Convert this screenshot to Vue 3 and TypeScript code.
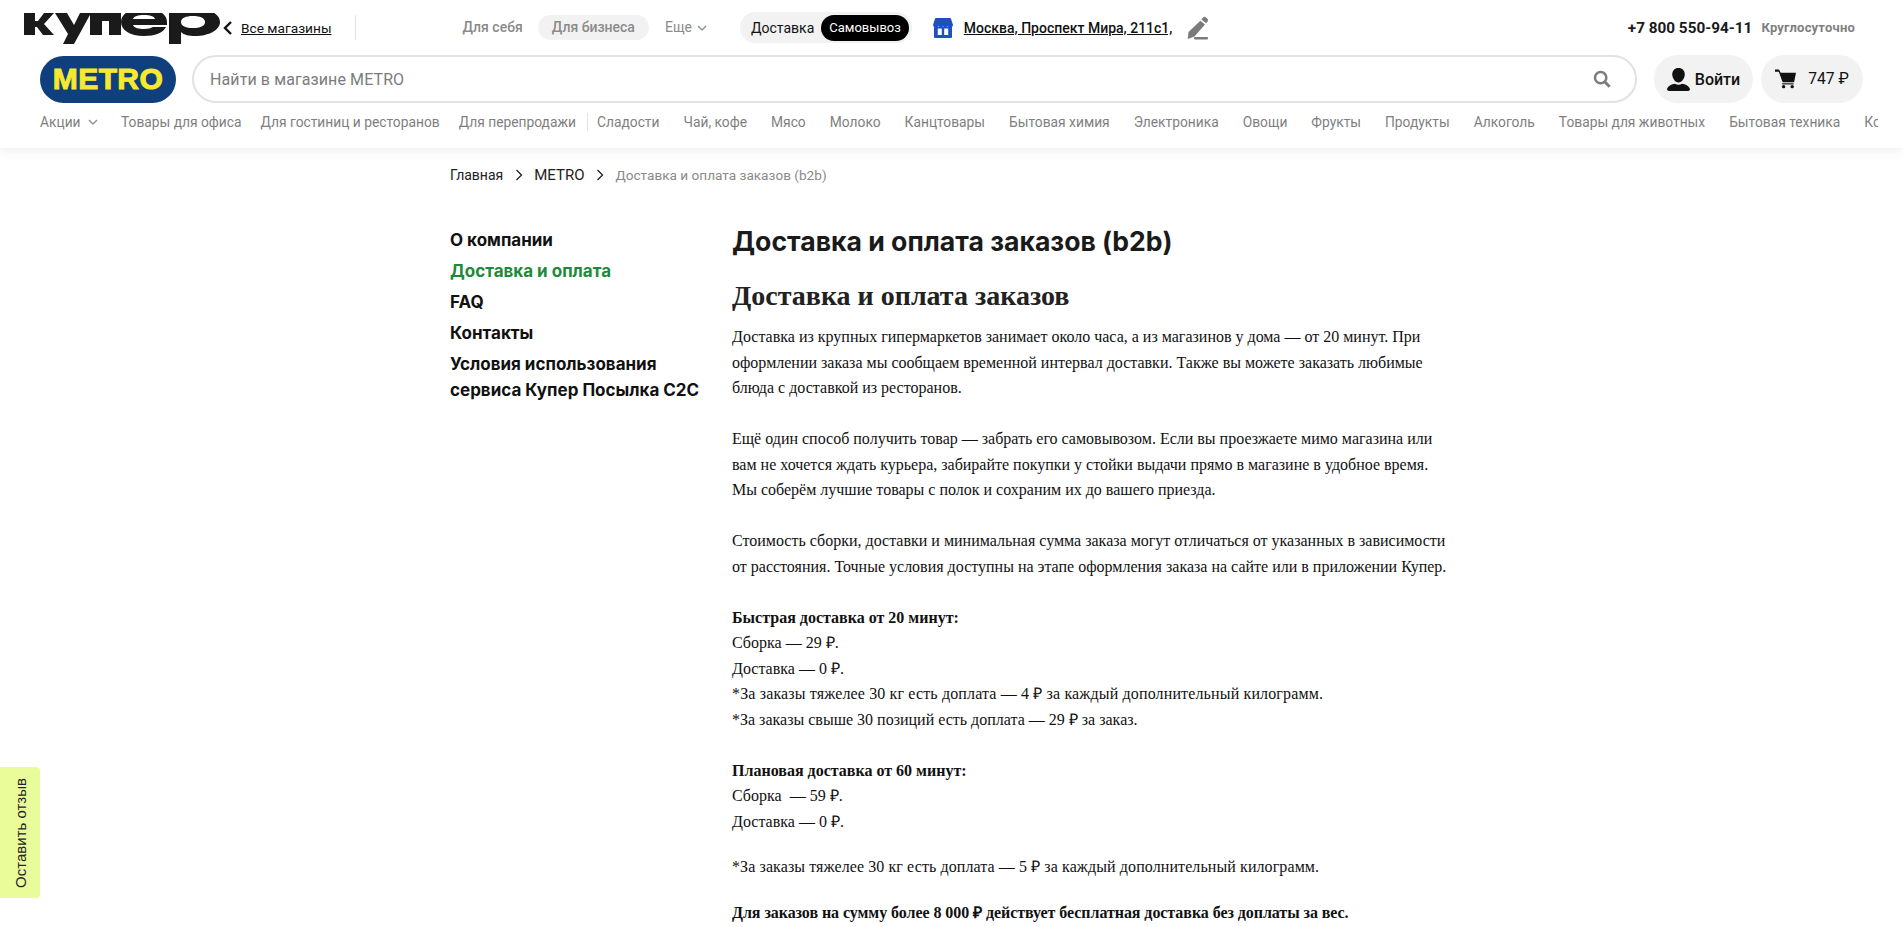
<template>
  <div class="page">
    <header class="header">
      <div class="top-row">
        <svg class="kuper" viewBox="0 0 196 31" aria-label="Купер">
          <path d="M0 0h11v8h3L20 0h10L20 11l10 11H19l-6-8h-2v8H0z" fill="#1a1a1a" />
          <path d="M31 0h12l7 12 6-12h11L50 31H39l5-10z" fill="#1a1a1a" />
          <path d="M66-2h31v24H85V8h-7v14H66z" fill="#1a1a1a" />
          <path fill-rule="evenodd" d="M143 12H109c1 3 6 4 11 4 4 0 7-1 9-2h13c-3 6-11 9-22 9-14 0-23-6-23-14S106-5 120-5s23 6 23 14zM109 6h22c-1-3-5-4-11-4s-10 1-11 4z" fill="#1a1a1a" />
          <path fill-rule="evenodd" d="M145-4h12v3c3-3 8-4 14-4 14 0 25 6 25 14s-11 14-25 14c-6 0-11-1-14-4v12H145zM157 9c0 4 5 6 12 6s12-2 12-6-5-6-12-6-12 2-12 6z" fill="#1a1a1a" />
        </svg>
        <a class="all-shops">
          <svg class="back" viewBox="0 0 10 16"><path d="M8 2 2 8l6 6" fill="none" stroke="#111" stroke-width="2.4" /></svg>
          <span>Все магазины</span>
        </a>
        <div class="divider"></div>
        <nav class="segments">
          <span class="seg">Для себя</span>
          <span class="seg seg-active">Для бизнеса</span>
          <span class="seg seg-more">Еще
            <svg class="chev" viewBox="0 0 10 6"><path d="M1 1l4 4 4-4" fill="none" stroke="#8f8f8f" stroke-width="1.4" /></svg>
          </span>
        </nav>
        <div class="delivery-switch">
          <span class="mode">Доставка</span>
          <span class="mode mode-on">Самовывоз</span>
        </div>
        <svg class="store" viewBox="0 0 20 20">
          <path d="M3 0h14a1 1 0 0 1 1 .7L20 7c0 1.500-1.500 2.500-3 2.500-1 0-2-.4-2.500-1.200-.6.800-1.500 1.200-2.500 1.200S10.500 9.100 10 8.300c-.5.800-1.500 1.200-2 1.200-1 0-1.900-.4-2.500-1.200C5 9.100 4 9.500 3 9.500 1.500 9.500 0 8.500 0 7L2 .7A1 1 0 0 1 3 0z" fill="#1c50c4" />
          <path d="M1 9h18v10a1 1 0 0 1-1 1H2a1 1 0 0 1-1-1z" fill="#1c50c4" />
          <path d="M4.800 10.500h4v6.500h-4zM11.200 10.500h4v6.500h-4z" fill="#fff" />
        </svg>
        <a class="address">Москва, Проспект Мира, 211с1,</a>
        <svg class="pencil" viewBox="0 0 24 24">
          <path d="M18 1.500a2 2 0 0 1 2.700-.2l1.700 1.400a2 2 0 0 1 .2 2.800l-1.500 1.800-4.700-3.900z" fill="#7b7b7b" />
          <path d="M15.300 4.700 20 8.600 9.500 20.500 2.700 23 3.500 16z" fill="#7b7b7b" />
          <rect x="9" y="21" width="14" height="2.400" rx="1" fill="#7b7b7b" />
        </svg>
        <div class="phone-box">
          <span class="phone">+7 800 550-94-11</span>
          <span class="phone-note">Круглосуточно</span>
        </div>
      </div>
      <div class="search-row">
        <div class="metro">
          <span class="metro-word">METRO</span>
        </div>
        <div class="search">
          <span class="placeholder">Найти в магазине METRO</span>
          <svg class="loupe" viewBox="0 0 20 20">
            <circle cx="8.500" cy="8.500" r="6.300" fill="none" stroke="#7d7d7d" stroke-width="2.800" />
            <path d="M13 13l5.500 5.500" stroke="#7d7d7d" stroke-width="3.200" />
          </svg>
        </div>
        <button class="pill login">
          <svg class="person" viewBox="0 0 24 24">
            <path d="M12 0c4 0 6.500 2.800 6.500 6.500 0 4.200-2.800 8.500-6.500 8.500S5.500 10.700 5.500 6.500C5.500 2.800 8 0 12 0z" fill="#111" />
            <path d="M8.300 16.500c1 .7 2.300 1.100 3.700 1.100s2.700-.4 3.700-1.100c3.500.6 6.800 1.800 8.300 5.500 0 1-.6 2-2 2H2c-1.400 0-2-1-2-2 1.500-3.700 4.800-4.900 8.300-5.500z" fill="#111" />
          </svg>
          <span>Войти</span>
        </button>
        <button class="pill cart">
          <svg class="cart-ico" viewBox="0 0 22 20">
            <path d="M0 0h3.500a1 1 0 0 1 1 .6L6 3.500h16l-2 10H8L4 2.500H0z" fill="#111" />
            <rect x="7.500" y="14.500" width="12" height="1.200" fill="#111" />
            <circle cx="9" cy="18" r="1.800" fill="#111" />
            <circle cx="18" cy="18" r="1.800" fill="#111" />
          </svg>
          <span>747 ₽</span>
        </button>
      </div>
      <nav class="cats">
        <span class="cat cat-promo">Акции
          <svg class="chev" viewBox="0 0 10 6"><path d="M1 1l4 4 4-4" fill="none" stroke="#8f8f8f" stroke-width="1.4" /></svg>
        </span>
        <span v-for="c in leadCats" :key="c" class="cat cat-lead">{{ c }}</span>
        <i class="cat-sep"></i>
        <span v-for="c in cats" :key="c" class="cat">{{ c }}</span>
      </nav>
    </header>

    <main class="main">
      <div class="crumbs">
        <span>Главная</span>
        <svg class="crumb-arrow" viewBox="0 0 8 12"><path d="M1.500 1l5 5-5 5" fill="none" stroke="#222" stroke-width="1.300" /></svg>
        <span class="crumb-metro">METRO</span>
        <svg class="crumb-arrow" viewBox="0 0 8 12"><path d="M1.500 1l5 5-5 5" fill="none" stroke="#222" stroke-width="1.300" /></svg>
        <span class="crumb-current">Доставка и оплата заказов (b2b)</span>
      </div>
      <div class="columns">
        <aside class="side">
          <a v-for="s in sideLinks" :key="s.label" class="side-link" :class="{ active: s.active }">{{ s.label }}</a>
        </aside>
        <article class="article">
          <h1>Доставка и оплата заказов (b2b)</h1>
          <h2>Доставка и оплата заказов</h2>
          <p>Доставка из крупных гипермаркетов занимает около часа, а из магазинов у дома — от 20 минут. При оформлении заказа мы сообщаем временной интервал доставки. Также вы можете заказать любимые блюда с доставкой из ресторанов.<br />&nbsp;</p>
          <p>Ещё один способ получить товар — забрать его самовывозом. Если вы проезжаете мимо магазина или вам не хочется ждать курьера, забирайте покупки у стойки выдачи прямо в магазине в удобное время. Мы соберём лучшие товары с полок и сохраним их до вашего приезда.<br />&nbsp;</p>
          <p>Стоимость сборки, доставки и минимальная сумма заказа могут отличаться от указанных в зависимости от расстояния. Точные условия доступны на этапе оформления заказа на сайте или в приложении Купер.<br />&nbsp;</p>
          <p><b>Быстрая доставка от 20 минут:</b><br />Сборка — 29 ₽.<br />Доставка — 0 ₽.<br /><span class="wide">*За заказы тяжелее 30 кг есть доплата — 4 ₽ за каждый дополнительный килограмм.</span><br />*За заказы свыше 30 позиций есть доплата — 29 ₽ за заказ.<br />&nbsp;</p>
          <p><b>Плановая доставка от 60 минут:</b><br />Сборка &nbsp;— 59 ₽.<br />Доставка — 0 ₽.</p>
          <p class="gap wide-less">*За заказы тяжелее 30 кг есть доплата — 5 ₽ за каждый дополнительный килограмм.</p>
          <p class="gap tight"><b>Для заказов на сумму более 8 000 ₽ действует бесплатная доставка без доплаты за вес.</b></p>
        </article>
      </div>
    </main>

    <button class="feedback"><span>Оставить отзыв</span></button>
  </div>
</template>

<script setup lang="ts">
const leadCats: string[] = ["Товары для офиса", "Для гостиниц и ресторанов", "Для перепродажи"];
const cats: string[] = [
  "Сладости",
  "Чай, кофе",
  "Мясо",
  "Молоко",
  "Канцтовары",
  "Бытовая химия",
  "Электроника",
  "Овощи",
  "Фрукты",
  "Продукты",
  "Алкоголь",
  "Товары для животных",
  "Бытовая техника",
  "Косметика",
];
const sideLinks: { label: string; active?: boolean }[] = [
  { label: "О компании" },
  { label: "Доставка и оплата", active: true },
  { label: "FAQ" },
  { label: "Контакты" },
  { label: "Условия использования сервиса Купер Посылка C2C" },
];
</script>

<style>
html, body { margin: 0; background: #fff; overflow: hidden; }
</style>

<style scoped>
.page {
  height: 927px;
  overflow: hidden;
  position: relative;
  font-family: Roboto, "Liberation Sans", sans-serif;
  color: #111;
}
.header {
  height: 148px;
  box-shadow: 0 2px 10px rgba(0,0,0,0.08);
  position: relative;
  overflow: hidden;
}
.top-row {
  height: 55px;
  display: flex;
  align-items: center;
  padding-left: 24px;
}
.kuper {
  width: 196px;
  height: 31px;
  align-self: flex-start;
  margin-top: 13px;
  flex: none;
}
.all-shops {
  display: flex;
  align-items: center;
  margin-left: 3px;
  font-size: 13.7px;
  color: #111;
}
.all-shops span { text-decoration: underline; }
.back { width: 10px; height: 16px; margin-right: 8px; }
.divider {
  width: 1px;
  height: 25px;
  background: #e4e4e4;
  margin-left: 23px;
}
.segments {
  display: flex;
  align-items: center;
  margin-left: 96px;
  font-size: 14px;
  color: #8a8a8a;
  font-weight: 500;
}
.seg { height: 25px; line-height: 25px; padding: 0 11px; border-radius: 13px; }
.seg-active { background: #f2f2f2; margin-left: 4px; margin-right: 5px; padding: 0 14px; }
.seg-more { font-weight: 400; display: flex; align-items: center; gap: 5px; padding-right: 0; }
.chev { width: 10px; height: 6px; }
.delivery-switch {
  display: flex;
  align-items: center;
  height: 31px;
  margin-left: 33px;
  padding: 0 3px 0 11px;
  border-radius: 16px;
  background: #f2f2f2;
  font-size: 14px;
}
.mode { height: 26px; line-height: 26px; }
.mode-on {
  background: #000;
  color: #fff;
  border-radius: 13px;
  padding: 0 8px;
  margin-left: 7px;
  font-size: 13px;
}
.store { width: 20px; height: 20px; margin-left: 21px; flex: none; }
.address {
  margin-left: 11px;
  font-size: 14px;
  font-weight: 500;
  text-decoration: underline;
  color: #111;
}
.pencil { width: 24px; height: 24px; margin-left: 13px; }
.phone-box {
  margin-left: auto;
  padding-right: 48px;
  display: flex;
  align-items: center;
  gap: 9px;
}
.phone { font-size: 15.3px; font-weight: 700; color: #1a1a1a; }
.phone-note { font-size: 13px; font-weight: 700; color: #7f7f7f; letter-spacing: 0.2px; }
.search-row {
  display: flex;
  align-items: center;
  padding-left: 40px;
  height: 48px;
}
.metro {
  width: 136px;
  height: 47px;
  flex: none;
  border-radius: 24px;
  background: #0f3f7c;
  display: flex;
  align-items: center;
  justify-content: center;
}
.metro-word {
  font-family: "Liberation Sans", sans-serif;
  font-weight: 700;
  font-size: 30px;
  letter-spacing: 0.4px;
  color: #f7e92f;
  -webkit-text-stroke: 1px #f7e92f;
}
.search {
  box-sizing: border-box;
  height: 48px;
  flex: none;
  margin-left: 16px;
  width: 1445px;
  border: 2px solid #e2e2e2;
  border-radius: 24px;
  display: flex;
  align-items: center;
  justify-content: space-between;
  padding: 0 24px 0 16px;
}
.placeholder { font-size: 16px; letter-spacing: 0.1px; color: #7c7c7c; }
.loupe { width: 18px; height: 18px; }
.pill {
  border: 0;
  height: 48px;
  border-radius: 24px;
  background: #f2f2f2;
  display: flex;
  align-items: center;
  font-family: inherit;
  color: #111;
  padding: 0;
  justify-content: center;
}
.login { width: 99px; margin-left: 17px; font-size: 16px; font-weight: 500; gap: 5px; }
.person { width: 23px; height: 23px; }
.cart { width: 102px; margin-left: 8px; font-size: 15.6px; gap: 12px; }
.cart-ico { width: 21px; height: 20px; }
.cats {
  display: flex;
  align-items: center;
  height: 36px;
  padding-left: 40px;
  width: 1878px;
  overflow: hidden;
  box-sizing: border-box;
  font-size: 13.8px;
  color: #7f7f7f;
  white-space: nowrap;
  margin-top: 1px;
}
.cat { margin-right: 24px; flex: none; }
.cat-lead { margin-right: 19px; }
.cat-promo { display: flex; align-items: center; gap: 7px; margin-right: 23.4px; }
.cat-sep { width: 1px; height: 18px; background: #e4e4e4; margin-left: -8px; margin-right: 9px; flex: none; }
.main { padding-left: 450px; width: 1000px; }
.crumbs {
  display: flex;
  align-items: center;
  margin-top: 17px;
  height: 20px;
  font-size: 14px;
  color: #222;
}
.crumb-arrow { width: 8px; height: 12px; margin: 0 11.5px; }
.crumb-metro { font-size: 15px; }
.crumb-current { font-size: 13.6px; color: #8a8a8a; }
.columns {
  display: flex;
  margin-top: 38px;
}
.side {
  width: 282px;
  flex: none;
  display: flex;
  flex-direction: column;
  gap: 5px;
  padding-top: 4px;
}
.side-link {
  font-family: Inter, Roboto, sans-serif;
  font-size: 17px;
  font-weight: 700;
  line-height: 26px;
  color: #111;
  width: 270px;
}
.side-link.active { color: #1d8a3a; }
.article { width: 718px; }
h1 {
  margin: 0;
  font-family: Inter, Roboto, sans-serif;
  font-size: 26.6px;
  font-weight: 700;
  line-height: 36px;
  color: #1a1a1a;
}
h2 {
  margin: 21px 0 0;
  font-family: "Liberation Serif", serif;
  font-size: 28px;
  font-weight: 700;
  line-height: 32px;
  color: #222;
}
p {
  margin: 0;
  font-family: "Liberation Serif", serif;
  font-size: 16px;
  line-height: 25.500px;
  color: #111;
}
h2 + p { margin-top: 12px; }
p.gap { margin-top: 20px; }
.wide { letter-spacing: 0.14px; }
.wide-less { letter-spacing: 0.09px; }
.tight { letter-spacing: -0.06px; }
.feedback {
  position: absolute;
  left: 0;
  top: 767px;
  width: 40px;
  height: 131px;
  border: 0;
  padding: 0;
  background: #eafc9a;
  border-radius: 0 4px 4px 0;
  display: flex;
  align-items: center;
  justify-content: center;
}
.feedback span {
  writing-mode: vertical-rl;
  transform: rotate(180deg);
  font-family: "Liberation Sans", sans-serif;
  font-size: 15px;
  color: #222;
}
</style>
